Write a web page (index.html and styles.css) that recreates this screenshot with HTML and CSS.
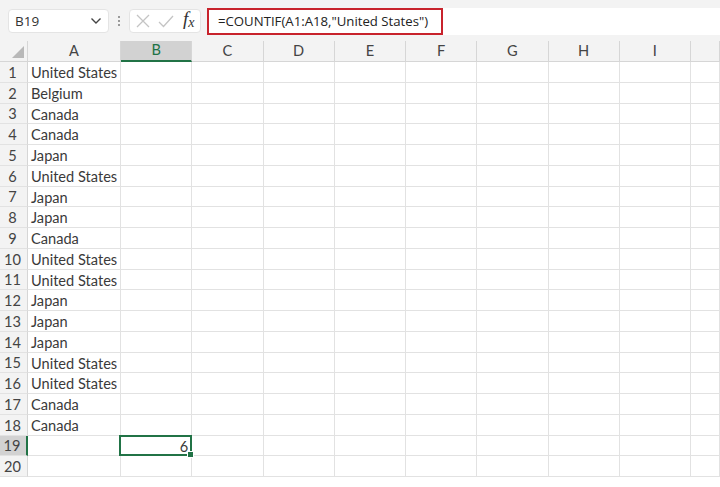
FILE: index.html
```html
<!DOCTYPE html>
<html lang="en">
<head>
  <meta charset="UTF-8">
  <title>COUNTIF</title>
  <link rel="stylesheet" href="styles.css">
</head>
<body>
  <div class="toolbar">
    <div class="name-box">
      <span>B19</span>
      <svg width="12" height="8" viewBox="0 0 12 8"><path d="M1.5 1.5 L6 6 L10.5 1.5" fill="none" stroke="#444" stroke-width="1.4"/></svg>
    </div>
    <div class="grip"><i></i><i></i><i></i></div>
    <div class="fx-box">
      <svg width="14" height="14" viewBox="0 0 14 14"><path d="M1 1 L13 13 M13 1 L1 13" stroke="#c4c4c4" stroke-width="1.3"/></svg>
      <svg width="16" height="13" viewBox="0 0 16 13"><path d="M1 7 L5.5 11.5 L15 1" fill="none" stroke="#c4c4c4" stroke-width="1.3"/></svg>
      <span class="fx">f<sub>x</sub></span>
    </div>
    <div class="formula-bar">
      <div class="formula">=COUNTIF(A1:A18,"United States")</div>
    </div>
  </div>

  <div class="sheet">
    <div class="corner"><span class="tri"></span></div>
    <div class="col-head">A</div>
    <div class="col-head active">B</div>
    <div class="col-head">C</div>
    <div class="col-head">D</div>
    <div class="col-head">E</div>
    <div class="col-head">F</div>
    <div class="col-head">G</div>
    <div class="col-head">H</div>
    <div class="col-head">I</div>
    <div class="col-head"></div>
  </div>

  <script>
    var data = ["United States", "Belgium", "Canada", "Canada", "Japan", "United States",
      "Japan", "Japan", "Canada", "United States", "United States", "Japan", "Japan",
      "Japan", "United States", "United States", "Canada", "Canada", "", ""];
    var sheet = document.querySelector(".sheet");

    for (var r = 0; r < 20; r++) {
      var head = document.createElement("div");
      head.className = "row-head" + (r === 18 ? " active" : "");
      head.textContent = r + 1;
      sheet.appendChild(head);

      for (var c = 0; c < 10; c++) {
        var cell = document.createElement("div");
        cell.className = "cell";
        if (c === 0) cell.textContent = data[r];
        if (r === 18 && c === 1) {
          cell.className = "cell num selected";
          cell.textContent = "6";
        }
        sheet.appendChild(cell);
      }
    }
  </script>
</body>
</html>
```

FILE: styles.css
```css
body {
  margin: 0;
  width: 720px;
  height: 487px;
  overflow: hidden;
  background: #fff;
  font-family: Lato, "Open Sans", sans-serif;
  color: #3a3a3a;
}

/* Formula toolbar */

.toolbar {
  display: flex;
  align-items: flex-start;
  height: 41px;
  box-sizing: border-box;
  padding-top: 9px;
  background: #f3f3f3;
}

.name-box {
  display: flex;
  align-items: center;
  justify-content: space-between;
  width: 101px;
  height: 24px;
  margin-left: 8px;
  box-sizing: border-box;
  padding: 0 6px 0 6px;
  background: #fff;
  border: 1px solid #e4e4e4;
  border-radius: 4px;
  font-family: "Open Sans", sans-serif;
  font-size: 13.5px;
  color: #333;
}

.grip {
  display: flex;
  flex-direction: column;
  justify-content: center;
  gap: 2px;
  width: 20px;
  height: 24px;
  align-items: center;
}

.grip i {
  width: 2px;
  height: 2px;
  background: #9a9a9a;
}

.fx-box {
  display: flex;
  align-items: center;
  gap: 8px;
  width: 72px;
  height: 24px;
  box-sizing: border-box;
  padding-left: 6px;
  background: #fff;
  border: 1px solid #e4e4e4;
  border-radius: 4px;
}

.fx {
  font-family: "Liberation Serif", serif;
  font-style: italic;
  font-size: 19px;
  color: #333;
  line-height: 1;
  margin-top: -3px;
  margin-left: 1px;
}

.fx sub {
  font-size: 14px;
  vertical-align: -2px;
}

.formula-bar {
  flex: 1;
  height: 27px;
  margin-left: 6px;
  margin-top: -1px;
  background: #fff;
}

.formula {
  display: inline-block;
  height: 27px;
  width: 236px;
  box-sizing: border-box;
  padding-left: 9px;
  border: 2px solid #c8232c;
  font-family: "Open Sans", sans-serif;
  font-size: 13.2px;
  line-height: 23px;
  color: #222;
}

/* Grid */

.sheet {
  display: grid;
  grid-template-columns: 28px 93px repeat(8, 71.25px) 1fr;
  grid-template-rows: 21px repeat(20, 20.75px);
  font-size: 14.6px;
}

.corner,
.col-head,
.row-head {
  background: #f3f3f3;
  color: #444;
  box-sizing: border-box;
  border-right: 1px solid #d6d6d6;
  border-bottom: 1px solid #d6d6d6;
}

.corner {
  position: relative;
}

.tri {
  position: absolute;
  right: 3px;
  bottom: 3px;
  width: 0;
  height: 0;
  border-left: 12px solid transparent;
  border-bottom: 12px solid #b8b8b8;
}

.col-head {
  display: flex;
  align-items: center;
  justify-content: center;
  line-height: 1;
}

.row-head {
  display: flex;
  align-items: center;
  justify-content: center;
  padding-right: 2px;
  padding-top: 1px;
  border-bottom-color: #e2e2e2;
}

.col-head.active {
  background: #d2d2d2;
  color: #217346;
  border-bottom: 2px solid #217346;
}

.row-head.active {
  background: #d2d2d2;
  color: #444;
  border-right: 2px solid #217346;
}

.cell {
  box-sizing: border-box;
  border-right: 1px solid #e2e2e2;
  border-bottom: 1px solid #e2e2e2;
  padding-left: 3px;
  padding-top: 1px;
  line-height: 20px;
  white-space: nowrap;
}

.cell.num {
  text-align: right;
  padding-right: 3px;
}

.cell.selected {
  position: relative;
}

.cell.selected::before {
  content: "";
  position: absolute;
  left: -2px;
  top: -1px;
  right: -1px;
  bottom: -1px;
  border: 2px solid #217346;
}

.cell.selected::after {
  content: "";
  position: absolute;
  right: -3px;
  bottom: -3px;
  width: 5px;
  height: 5px;
  background: #217346;
  border: 1px solid #fff;
}
```
